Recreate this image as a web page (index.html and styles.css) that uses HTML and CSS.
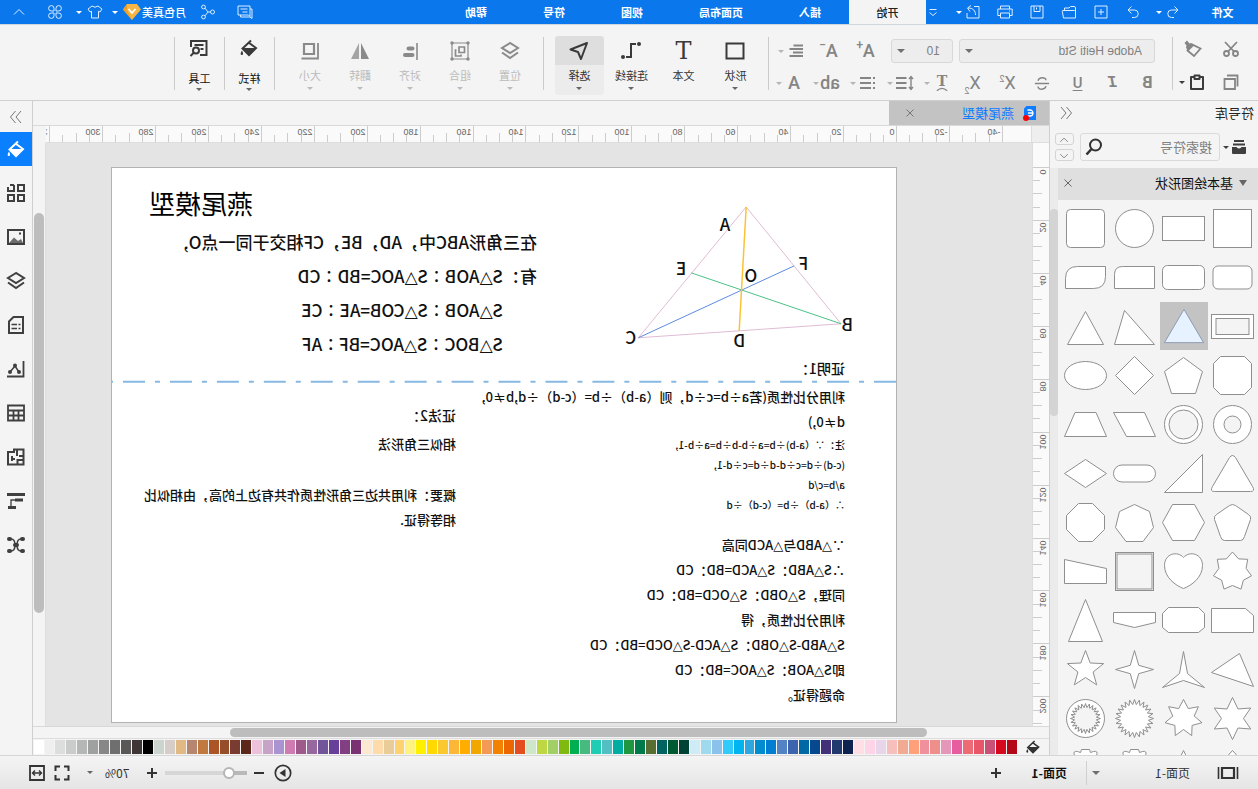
FILE: index.html
```html
<!DOCTYPE html>
<html lang="zh-CN">
<head>
<meta charset="utf-8">
<title>燕尾模型</title>
<link rel="stylesheet" href="styles.css">
</head>
<body>
<svg class="sprite" aria-hidden="true">
  <symbol id="undo" viewBox="0 0 16 16"><path d="M3 6h6.500a3.500 3.500 0 0 1 0 7.500H7M6.500 2.500 3 6l3.500 3.500"/></symbol>
  <symbol id="redo" viewBox="0 0 16 16"><path d="M13 6H6.500a3.500 3.500 0 0 0 0 7.500H9M9.500 2.500 13 6 9.500 9.500"/></symbol>
  <symbol id="new" viewBox="0 0 16 16"><path d="M2 2h12v12H2zM8 5v6M5 8h6"/></symbol>
  <symbol id="open" viewBox="0 0 16 16"><path d="M1.500 14V4q0-1.500 1.500-1.500h3.500L8 4h4.500v2.500M1.500 13.500V7.500q0-1 1-1h11.500q.8 0 .7.800L13.500 14h-12"/></symbol>
  <symbol id="save" viewBox="0 0 16 16"><path d="M2 2h12v12H2zM5 2v5.500h6V2M8.500 3.500v2"/></symbol>
  <symbol id="print" viewBox="0 0 16 16"><path d="M3.500 5V2h9v3M3.500 11.500H.8V5h14.400v6.500h-2.700M3.500 9h9v5h-9zM3 7h1"/></symbol>
  <symbol id="export" viewBox="0 0 16 16"><path d="M7 2.500H2v11.500h12V9M5.500 11c0-4 2-7 7.500-7M10 1.500l3.500 2.500-2.500 3.500"/></symbol>
  <symbol id="more" viewBox="0 0 16 16"><path d="M4.500 5.500h7M4.500 8.500 8 11.500l3.500-3"/></symbol>
  <symbol id="chat" viewBox="0 0 16 16"><path d="M3 2h12v9H4.500L3 12.500zM3 5H1v9.500l2-1.500h9.500V11M5.500 5h7M5.500 8h5"/></symbol>
  <symbol id="share" viewBox="0 0 16 16"><circle cx="3.500" cy="8" r="2"/><circle cx="12.500" cy="3" r="1.900"/><circle cx="12.500" cy="13" r="1.900"/><path d="M5.500 8h2.500l3-3.800M8 8l3 3.800"/></symbol>
  <symbol id="gem" viewBox="0 0 18 16"><path fill="#f7b643" stroke="none" d="M4 0h10l4 5.500L9 16 0 5.500z"/><path fill="#e89f2c" stroke="none" d="M14 0l4 5.500L9 16l5-10z"/><path stroke="#fff" stroke-width="1.800" d="M5.500 5 9 9l3.500-4"/></symbol>
  <symbol id="shirt" viewBox="0 0 16 16"><path d="M5 2q3 2.500 6 0l4 3-2 3-1.500-.8V14h-7V7.200L3 8 1 5z"/></symbol>
  <symbol id="apps" viewBox="0 0 16 16"><path d="M7 7H4.300A2.700 2.700 0 1 1 7 4.300zM9 7V4.300A2.700 2.700 0 1 1 11.700 7zM7 9v2.700A2.700 2.700 0 1 1 4.300 9zM9 9h2.700A2.700 2.700 0 1 1 9 11.700z"/></symbol>
  <symbol id="up" viewBox="0 0 16 16"><path d="M3 10.500 8 5.500l5 5"/></symbol>
  <symbol id="down" viewBox="0 0 16 16"><path d="M3 5.500l5 5 5-5"/></symbol>

  <symbol id="cut" viewBox="0 0 18 18"><g stroke-width="1.800"><circle cx="4.500" cy="13.500" r="2.500"/><circle cx="13.500" cy="13.500" r="2.500"/><path d="M3 2l9 9.500M15 2 6 11.500"/></g></symbol>
  <symbol id="brush" viewBox="0 0 18 18"><path stroke-width="1.800" d="M1.500 8.500 10 4.500l4.500 6-6.500 5.500z"/><path fill="currentColor" stroke="none" d="M8 5.500 11 3l1.500.5L15 .5 17.500 3 15.500 5.500l.5 2-2 4z"/></symbol>
  <symbol id="copy" viewBox="0 0 18 18"><path stroke-width="1.800" d="M5 6h10.500v10H5zM2.500 13.500V2.500H13"/></symbol>
  <symbol id="paste" viewBox="0 0 18 18"><path stroke-width="2" stroke-linejoin="round" d="M6 4H3v12h12V4h-3M6.500 2.500h5V6h-5z"/></symbol>
  <symbol id="align" viewBox="0 0 18 18"><path stroke-width="1.800" d="M2 3.500h9.500M2 7h13.500M2 10.500h10M2 14h13.500"/></symbol>
  <symbol id="spacing" viewBox="0 0 18 18"><path stroke-width="1.400" d="M3 3v12M1 5l2-2.500L5 5M1 13l2 2.500L5 13"/><path stroke-width="1.800" d="M7.500 4H18M7.500 9H18M7.500 14H18"/></symbol>
  <symbol id="bullets" viewBox="0 0 18 18"><path stroke-width="1.800" d="M2 4h2M2 9h2M2 14h2M6 4h11M6 9h11M6 14h11"/></symbol>
  <symbol id="strike" viewBox="0 0 18 18"><path stroke-width="1.600" d="M1 9.500h16M13.500 6.500C12.500 2 4.500 2 4.500 6M4.500 12.500C5.500 17 13.500 17 13.500 13"/></symbol>
  <symbol id="curve" viewBox="0 0 14 4"><path stroke-width="1.600" d="M1 4Q7-1.500 13 4"/></symbol>

  <symbol id="rect" viewBox="0 0 20 20"><path stroke-width="2" d="M1.500 2.500h17v15h-17z"/></symbol>
  <symbol id="connector" viewBox="0 0 20 20"><path d="M5 3h5v13h5" stroke-width="2"/><circle cx="2" cy="3" r="2" fill="currentColor" stroke="none"/><circle cx="18" cy="16" r="2" fill="currentColor" stroke="none"/></symbol>
  <symbol id="pointer" viewBox="0 0 20 20"><path stroke-width="2" stroke-linejoin="round" d="M2 2 18.500 8.500 11 11 8 18z"/></symbol>
  <symbol id="layers" viewBox="0 0 20 20"><path stroke-width="2" d="M10 2l8 5-8 5-8-5zM2 11.500l8 5.500 8-5.500"/></symbol>
  <symbol id="group" viewBox="0 0 20 20"><path stroke-width="1.200" d="M2 2h16v16H2z"/><path stroke-width="1.700" d="M5.500 6H11v5.500H5.500zM13.500 9h1v6H9v-1.500"/><g stroke="none" fill="currentColor"><circle cx="2" cy="2" r="1.700"/><circle cx="18" cy="2" r="1.700"/><circle cx="2" cy="18" r="1.700"/><circle cx="18" cy="18" r="1.700"/></g></symbol>
  <symbol id="alignobj" viewBox="0 0 20 20"><path stroke-width="1.600" d="M3 2v17"/><path stroke-width="4" stroke-linecap="round" d="M7.500 7.500h4M7.500 14h7.500"/></symbol>
  <symbol id="flip" viewBox="0 0 20 20"><path fill="currentColor" stroke="none" d="M9 2v16H1z"/><path fill="currentColor" opacity=".75" stroke="none" d="M11 2v16h8z"/></symbol>
  <symbol id="size" viewBox="0 0 20 20"><path stroke-width="2.200" d="M6 3h10v10H6z"/><path stroke-width="1.800" d="M2 2v15.500h16.500"/></symbol>
  <symbol id="bucket" viewBox="0 0 20 20"><path stroke-width="2" d="M8 2.500 16.500 10.500 10 17 3 10 10.500 4.500"/><path fill="currentColor" stroke="none" d="M3 10h14l-7 7.500zM17 12.500q2.500 4 .5 4.500t-1.500-2z"/></symbol>
  <symbol id="tool" viewBox="0 0 20 20"><path stroke-width="2" d="M9 17H2.500V3H18v6M5.500 7h9M5.500 11h3"/><circle cx="13" cy="12.500" r="3" stroke-width="2"/><path stroke-width="2" d="M15 14.500l3.500 3.500"/></symbol>

  <symbol id="library" viewBox="0 0 18 18"><path stroke-width="2.200" d="M4 3h10M3 6.500h12"/><path fill="currentColor" stroke="none" d="M2 9h4.500q2.500 3 5 0H16v6q0 1-1 1H3q-1 0-1-1z"/></symbol>
  <symbol id="search" viewBox="0 0 18 18"><circle cx="7.500" cy="7" r="5.500" stroke-width="2"/><path stroke-width="2.600" d="M11.500 11l5 5.500"/></symbol>
  <symbol id="rr" viewBox="0 0 14 14"><path d="M2 1l5 6-5 6M7.500 1l5 6-5 6"/></symbol>
  <symbol id="ll" viewBox="0 0 14 14"><path d="M12 1 7 7l5 6M6.500 1l-5 6 5 6"/></symbol>
  <symbol id="cross" viewBox="0 0 10 10"><path d="M1.500 1.500l7 7M8.500 1.500l-7 7"/></symbol>
  <symbol id="file" viewBox="0 0 14 16"><path fill="#0d7cff" stroke="none" d="M1 1h9.500L13 3.500V15H1z"/><path stroke="#fff" stroke-width="1.300" d="M9.500 5H7a3 3 0 0 0 0 6h2.500M4.500 8H9"/><circle cx="11" cy="13" r="3" fill="red" stroke="none"/></symbol>

  <symbol id="s-apps" viewBox="0 0 20 20"><path d="M2 2h6v6H2zM12 2h4M12 2v6h6V4M2 12h6v6H2zM12 12h6v6h-6z"/></symbol>
  <symbol id="s-image" viewBox="0 0 20 20"><path d="M2 3h16v14H2z"/><path fill="currentColor" stroke="none" opacity=".75" d="M3 16l2-4 3 2 4-3.500 5 5.500z"/><path fill="currentColor" stroke="none" d="M5 5.500h2v2H5z"/></symbol>
  <symbol id="s-doc" viewBox="0 0 20 20"><path d="M3 2h9.500L17 6.500V18H3z"/><path stroke-width="1.700" d="M5.500 9.500h2M9 9.500h5.500M5.500 13.500h2M9 13.500h5.500"/></symbol>
  <symbol id="s-chart" viewBox="0 0 20 20"><path stroke-width="1.800" d="M2.500 2v15.500H19"/><path stroke-width="1.500" d="M7 13l4-6 5 6"/><g fill="currentColor" stroke="none"><circle cx="7" cy="13" r="2"/><circle cx="11" cy="6.500" r="2"/><circle cx="16" cy="13" r="2"/></g></symbol>
  <symbol id="s-table" viewBox="0 0 20 20"><path stroke-width="1.800" d="M2 2.500h16v15H2zM2 7.500h16M2 12.500h16M7.500 7.500v10M12.500 7.500v10"/></symbol>
  <symbol id="s-plan" viewBox="0 0 20 20"><path d="M2.500 2.500H12V5h6v12.500H2.500zM2.500 9H7M9 2.500V9M2.500 13h6v4.500M14 9v5M11 12h3"/></symbol>
  <symbol id="s-gantt" viewBox="0 0 20 20"><path stroke-width="3" d="M1 3.500h18M3 9h8M10 16.500h8"/><path stroke-width="1.300" d="M10 9h5v7"/></symbol>
  <symbol id="s-mind" viewBox="0 0 20 20"><g fill="currentColor" stroke="none"><rect x="1" y="2" width="5" height="4" rx="2"/><rect x="14" y="2" width="5" height="4" rx="2"/><rect x="1" y="14" width="5" height="4" rx="2"/><rect x="14" y="14" width="5" height="4" rx="2"/><rect x="7" y="8" width="6" height="4" rx="2"/></g><path stroke-width="1.500" d="M5 4c3 0 4 2 4 6s-1 6-4 6M15 4c-3 0-4 2-4 6s1 6 4 6"/></symbol>

  <symbol id="b-view" viewBox="0 0 22 16"><path stroke-width="2.200" d="M5 3h12v10H5z"/><path stroke-width="1.600" d="M1.500 2v12M20.500 2v12"/></symbol>
  <symbol id="b-play" viewBox="0 0 18 18"><circle cx="9" cy="9" r="7.700" stroke-width="1.700"/><path fill="currentColor" stroke="none" d="M6.500 5l6 4-6 4z"/></symbol>
  <symbol id="b-minus" viewBox="0 0 12 12"><path stroke-width="2" d="M1 6h10"/></symbol>
  <symbol id="b-plus" viewBox="0 0 12 12"><path stroke-width="2" d="M1 6h10M6 1v10"/></symbol>
  <symbol id="b-full" viewBox="0 0 18 18"><path stroke-width="2" d="M2.500 7V2.500H7M11 2.500h4.500V7M15.500 11v4.500H11M7 15.500H2.500V11"/></symbol>
  <symbol id="b-fit" viewBox="0 0 18 18"><path stroke-width="1.800" d="M2 2h14v14H2z"/><path stroke-width="1.400" d="M5 9h8M7 6.500 4.500 9 7 11.500M11 6.500l2.500 2.500-2.500 2.500"/></symbol>
</svg>

<header class="titlebar">
  <button class="menu menu-file">文件</button>
  <div class="quick">
    <button class="qbtn" aria-label="撤销"><svg><use href="#undo"/></svg></button><i class="caret light"></i>
    <button class="qbtn" aria-label="恢复"><svg><use href="#redo"/></svg></button>
    <button class="qbtn" aria-label="新建"><svg><use href="#new"/></svg></button>
    <button class="qbtn" aria-label="打开"><svg><use href="#open"/></svg></button>
    <button class="qbtn" aria-label="保存"><svg><use href="#save"/></svg></button>
    <button class="qbtn" aria-label="打印"><svg><use href="#print"/></svg></button>
    <button class="qbtn" aria-label="导出"><svg><use href="#export"/></svg></button><i class="caret light"></i>
    <button class="qbtn" aria-label="更多"><svg><use href="#more"/></svg></button>
  </div>
  <nav class="menus">
    <button class="menu active">开始</button>
    <button class="menu">插入</button>
    <button class="menu menu-wide">页面布局</button>
    <button class="menu">视图</button>
    <button class="menu">符号</button>
    <button class="menu">帮助</button>
  </nav>
  <div class="account">
    <button class="abtn" aria-label="评论"><svg><use href="#chat"/></svg></button>
    <button class="abtn" aria-label="分享"><svg><use href="#share"/></svg></button>
    <span class="user">月色真美</span>
    <svg class="gem"><use href="#gem"/></svg><i class="caret light"></i>
    <button class="abtn" aria-label="主题"><svg><use href="#shirt"/></svg></button><i class="caret light"></i>
    <button class="abtn abtn-apps" aria-label="应用"><svg><use href="#apps"/></svg></button>
    <button class="abtn" aria-label="收起"><svg><use href="#up"/></svg></button>
  </div>
</header>

<div class="ribbon">
  <div class="clip">
    <button class="ic" aria-label="剪切"><svg><use href="#cut"/></svg></button>
    <button class="ic" aria-label="格式刷"><svg><use href="#brush"/></svg></button>
    <button class="ic" aria-label="复制"><svg><use href="#copy"/></svg></button>
    <button class="ic strong" aria-label="粘贴"><svg><use href="#paste"/></svg><i class="caret"></i></button>
  </div>
  <i class="sep"></i>
  <div class="fonts">
    <div class="frow frow-top">
      <span class="pick pick-font"><select aria-label="字体"><option>Adobe Heiti Std</option></select><i class="caret wide"></i></span>
      <span class="pick pick-size"><select aria-label="字号"><option>10</option></select><i class="caret wide"></i></span>
      <button class="split letter">A<sup>+</sup></button>
      <button class="split letter">A<sup>−</sup></button>
      <button class="split" aria-label="对齐"><svg><use href="#align"/></svg><i class="caret faint"></i></button>
    </div>
    <div class="frow">
      <button class="fmt bold">B</button>
      <button class="fmt ital">I</button>
      <button class="fmt under">U</button>
      <button class="fmt" aria-label="删除线"><svg><use href="#strike"/></svg></button>
      <button class="fmt">X<sup>2</sup></button>
      <button class="fmt">X<sub>2</sub></button>
      <button class="split tcurve"><span>T<svg><use href="#curve"/></svg></span><i class="caret faint"></i></button>
      <button class="split" aria-label="行距"><svg><use href="#spacing"/></svg><i class="caret faint"></i></button>
      <button class="split" aria-label="项目符号"><svg><use href="#bullets"/></svg><i class="caret faint"></i></button>
      <button class="split word"><span>ab</span><i class="caret faint"></i></button>
      <button class="split word"><span>A</span><i class="caret faint"></i></button>
    </div>
  </div>
  <i class="sep"></i>
  <div class="bigs insert">
    <button class="big"><svg><use href="#rect"/></svg><span>形状</span><i class="caret"></i></button>
    <button class="big"><b class="bigt">T</b><span>文本</span></button>
    <button class="big"><svg><use href="#connector"/></svg><span>连接线</span><i class="caret"></i></button>
    <button class="big on"><svg><use href="#pointer"/></svg><span>选择</span><i class="caret"></i></button>
  </div>
  <i class="sep"></i>
  <div class="bigs arrange">
    <button class="big off"><svg><use href="#layers"/></svg><span>位置</span><i class="caret"></i></button>
    <button class="big off"><svg><use href="#group"/></svg><span>组合</span><i class="caret"></i></button>
    <button class="big off"><svg><use href="#alignobj"/></svg><span>对齐</span><i class="caret"></i></button>
    <button class="big off"><svg><use href="#flip"/></svg><span>翻转</span><i class="caret"></i></button>
    <button class="big off"><svg><use href="#size"/></svg><span>大小</span><i class="caret"></i></button>
  </div>
  <i class="sep"></i>
  <div class="bigs"><button class="big roomy"><svg><use href="#bucket"/></svg><span>样式</span><i class="caret"></i></button></div>
  <i class="sep"></i>
  <div class="bigs"><button class="big roomy"><svg><use href="#tool"/></svg><span>工具</span><i class="caret"></i></button></div>
  <i class="sep"></i>
</div>

<main class="work">
  <aside class="library">
    <div class="lib-title"><h2>符号库</h2><button class="bare" aria-label="收起符号库"><svg class="i14"><use href="#rr"/></svg></button></div>
    <div class="lib-search">
      <button class="bare lib-menu" aria-label="符号库菜单"><svg class="i18"><use href="#library"/></svg><i class="caret"></i></button>
      <label class="searchbox"><input type="text" placeholder="搜索符号" aria-label="搜索符号"><svg class="i18"><use href="#search"/></svg></label>
      <div class="steps">
        <button aria-label="上一个"><svg><use href="#up"/></svg></button>
        <button aria-label="下一个"><svg><use href="#down"/></svg></button>
      </div>
    </div>
    <div class="lib-body">
      <div class="lib-main">
        <div class="lib-head"><i class="tri"></i><h3>基本绘图形状</h3><button class="bare" aria-label="关闭"><svg class="i10"><use href="#cross"/></svg></button></div>
        <div class="shapes" id="shapes"></div>
      </div>
      <div class="lib-scroll"><i></i></div>
    </div>
  </aside>

  <section class="editor">
    <div class="tabs">
      <div class="tab"><svg><use href="#file"/></svg><span>燕尾模型</span><button class="bare" aria-label="关闭标签"><svg class="i10"><use href="#cross"/></svg></button></div>
    </div>
    <div class="stage">
      <div class="corner"></div>
      <svg class="hruler" id="hruler"></svg>
      <div class="gutter"></div>
      <svg class="vruler" id="vruler"></svg>
      <div class="canvas">
        <article class="page">
          <svg class="figure" viewBox="0 0 785 555">
            <g class="lines">
              <path stroke="#e0bcd4" d="M150 39 55 156 258 170z"/>
              <path stroke="#4cc088" d="M55 156 205 105"/>
              <path stroke="#5b8be0" d="M258 170 102 98"/>
              <path stroke="#fcc236" stroke-width="1.500" d="M150 39 157 163"/>
              <path stroke="#86b8e2" stroke-width="2" stroke-dasharray="22 10 5 10" d="M0 214H785"/>
            </g>
            <g class="names">
              <text x="166" y="63">A</text><text x="210" y="107">E</text><text x="88" y="102">F</text><text x="139" y="114">O</text><text x="43" y="163">B</text><text x="260" y="176">C</text><text x="151" y="179">D</text>
            </g>
          </svg>
          <h1 class="doc-title">燕尾模型</h1>
          <div class="given">
            <p>在三角形ABC中，AD，BE，CF相交于同一点O,</p>
            <p>有：S<i>△</i>AOB∶S<i>△</i>AOC=BD∶CD</p>
            <p class="inset">S<i>△</i>AOB∶S<i>△</i>COB=AE∶CE</p>
            <p class="inset">S<i>△</i>BOC∶S<i>△</i>AOC=BF∶AF</p>
          </div>
          <div class="proof one">
            <h4>证明1：</h4>
            <p>利用分比性质(若a÷b=c÷d，则（a-b）÷b=（c-d）÷d,b≠0,</p>
            <p>d≠0,)</p>
            <div class="notes">
              <p>注：∵（a-b)÷b=a÷b-b÷b=a÷b-1,</p>
              <p>(c-d)÷d=c÷d-d÷d=c÷d-1,</p>
              <p>a/b=c/d</p>
              <p>∴（a-b）÷b=（c-d）÷d</p>
            </div>
            <p>∵<i>△</i>ABD与<i>△</i>ACD同高</p>
            <p>∴S<i>△</i>ABD：S<i>△</i>ACD=BD：CD</p>
            <p>同理，S<i>△</i>OBD：S<i>△</i>OCD=BD：CD</p>
            <p>利用分比性质，得</p>
            <p>S<i>△</i>ABD-S<i>△</i>OBD：S<i>△</i>ACD-S<i>△</i>OCD=BD：CD</p>
            <p>即S<i>△</i>AOB：S<i>△</i>AOC=BD：CD</p>
            <p>命题得证。</p>
          </div>
          <div class="proof two">
            <h4>证法2：</h4>
            <p>相似三角形法</p>
            <p class="later">概要：利用共边三角形性质作共有边上的高，由相似比</p>
            <p>相等得证.</p>
          </div>
        </article>
      </div>
      <div class="vscroll"><i></i></div>
    </div>
    <div class="hscroll"><i></i></div>
    <div class="palette"><button class="bare" aria-label="填充"><svg class="i16"><use href="#bucket"/></svg></button><div class="swatches" id="swatches"></div></div>
  </section>

  <aside class="side">
    <button class="fold" aria-label="展开"><svg class="i14"><use href="#ll"/></svg></button>
    <button class="sbtn current" aria-label="样式"><svg><use href="#bucket"/></svg></button>
    <button class="sbtn" aria-label="符号"><svg><use href="#s-apps"/></svg></button>
    <button class="sbtn" aria-label="图片"><svg><use href="#s-image"/></svg></button>
    <button class="sbtn" aria-label="图层"><svg><use href="#layers"/></svg></button>
    <button class="sbtn" aria-label="文档"><svg><use href="#s-doc"/></svg></button>
    <button class="sbtn" aria-label="图表"><svg><use href="#s-chart"/></svg></button>
    <button class="sbtn" aria-label="表格"><svg><use href="#s-table"/></svg></button>
    <button class="sbtn" aria-label="平面图"><svg><use href="#s-plan"/></svg></button>
    <button class="sbtn" aria-label="甘特图"><svg><use href="#s-gantt"/></svg></button>
    <button class="sbtn" aria-label="思维导图"><svg><use href="#s-mind"/></svg></button>
  </aside>
</main>

<footer class="status">
  <div class="pager">
    <button class="bare" aria-label="视图"><svg class="bview"><use href="#b-view"/></svg></button>
    <span class="page-name">页面-1</span>
    <i class="caret wide"></i>
  </div>
  <button class="bare page-tab">页面-1</button>
  <button class="bare add" aria-label="添加页面"><svg class="i12"><use href="#b-plus"/></svg></button>
  <div class="zoom">
    <button class="bare" aria-label="播放"><svg class="i18"><use href="#b-play"/></svg></button>
    <button class="bare" aria-label="缩小"><svg class="i12"><use href="#b-minus"/></svg></button>
    <input type="range" min="0" max="100" value="18" aria-label="缩放">
    <button class="bare" aria-label="放大"><svg class="i12"><use href="#b-plus"/></svg></button>
    <span class="percent">70%</span><i class="caret"></i>
    <button class="bare" aria-label="全屏"><svg class="i18"><use href="#b-full"/></svg></button>
    <button class="bare" aria-label="适合宽度"><svg class="i18"><use href="#b-fit"/></svg></button>
  </div>
</footer>
<script src="app.js"></script>
</body>
</html>
```

FILE: styles.css
```css
* { box-sizing: border-box; }
html, body { height: 100%; margin: 0; }
html { overflow: hidden; background: #f4f4f4; }
body {
  display: flex; flex-direction: column;
  transform: scaleX(-1);
  font: 12px/16px "Noto Sans CJK SC", sans-serif;
  color: #222; background: #f4f4f4;
}
h1, h2, h3, h4, p { margin: 0; font-weight: 400; }
button, input, select { font: inherit; color: inherit; margin: 0; }
button { padding: 0; border: 0; background: none; }
svg { fill: none; stroke: currentColor; flex: none; }
.sprite { display: none; }
.i10 { width: 10px; height: 10px; }
.i12 { width: 12px; height: 12px; }
.i14 { width: 14px; height: 14px; }
.i16 { width: 16px; height: 16px; }
.i18 { width: 18px; height: 18px; }
.bare { display: flex; align-items: center; justify-content: center; }
.caret {
  flex: none; width: 0; height: 0;
  border: 3px solid transparent; border-top-color: currentColor; border-bottom: 0;
}
.caret.light { color: #fff; }
.caret.wide { border-width: 4px 4px 0; color: #707070; }
.caret.faint { color: #b5b5b5; }

/* title bar */
.titlebar { display: flex; flex: none; height: 24px; background: #0a77ec; color: #fff; }
.menu { width: 78px; height: 24px; font-size: 11px; font-weight: 700; }
.menu-file { width: 71px; }
.menu-wide { width: 100px; }
.menu.active { width: 77px; background: #f4f4f4; color: #222; font-weight: 500; }
.menus { display: flex; flex: none; }
.quick { display: flex; flex: none; align-items: center; width: 261px; gap: 5px; }
.qbtn { flex: none; width: 27px; height: 24px; display: grid; place-items: center; }
.qbtn + .caret { margin: 0 -3px 0 -7px; }
.quick .caret + .qbtn { margin-left: 7px; }
.qbtn svg, .abtn svg { width: 16px; height: 16px; color: #dceeff; }
.account { display: flex; align-items: center; margin-left: auto; padding-right: 11px; gap: 5px; }
.abtn { width: 16px; height: 24px; display: grid; place-items: center; }
.abtn:first-child { margin-right: 16px; }
.abtn:last-child { margin-left: 15px; }
.abtn + .user { margin-left: 9px; }
.caret + .abtn { margin-left: 4px; }
.caret + .abtn-apps { margin-left: 8px; }
.user { font-size: 11px; font-weight: 500; }
.gem { width: 18px; height: 16px; margin-left: -4px; }

/* ribbon */
.ribbon { display: flex; flex: none; height: 77px; padding-top: 12px; border-top: 1px solid #cfd6dd; border-bottom: 1px solid #cfcfcf; color: #858585; }
.sep { flex: none; width: 1px; height: 53px; background: #cbcbcb; }
.clip { width: 85px; padding-left: 8px; display: grid; grid-template-columns: 38px 38px; grid-template-rows: 24px 34px; row-gap: 4px; height: 60px; }
.ic { display: flex; align-items: center; justify-content: center; gap: 3px; }
.ic svg { width: 18px; height: 18px; }
.strong { color: #3c3c3c; }
.fonts { width: 403px; padding: 2px 0 0 7px; }
.frow { display: flex; align-items: center; height: 24px; }
.frow-top { padding-left: 10px; margin-bottom: 8px; }
.pick { display: flex; align-items: center; height: 24px; border: 1px solid #d8d8d8; border-radius: 3px; background: #ededed; }
.pick select { flex: 1; min-width: 0; appearance: none; border: 0; background: none; padding: 0 0 0 12px; font: 12px "Liberation Sans", "Noto Sans CJK SC", sans-serif; color: #808080; }
.pick .caret { margin-right: 5px; }
.pick-font { width: 196px; }
.pick-size { width: 62px; margin: 0 7px 0 6px; }
.split { width: 37px; height: 24px; display: flex; align-items: center; gap: 3px; padding-left: 4px; }
.split svg { width: 18px; height: 18px; }
.split .caret { margin-left: auto; margin-right: 6px; }
.letter, .fmt, .word { font: 400 18px/20px "Roboto", sans-serif; }
.letter { justify-content: center; gap: 0; padding: 0; font-weight: 500; }
.letter sup { align-self: flex-start; font-size: 12px; line-height: 12px; }
.letter + .split:last-child { margin-left: 1px; }
.fmt { width: 35px; height: 24px; }
.fmt svg { display: block; width: 16px; height: 16px; margin: 0 auto; }
.fmt sup, .fmt sub { font-size: 9px; line-height: 0; }
.bold { font-weight: 700; font-size: 16px; }
.ital { font-style: italic; font-size: 16px; font-family: "Liberation Mono", monospace; font-weight: 700; }
.under { font-size: 15px; font-weight: 500; text-decoration: underline; text-underline-offset: 2px; }
.word { font-weight: 500; }
.word span { width: 18px; text-align: center; }
.tcurve { font: 700 14px/12px "DejaVu Serif", serif; }
.tcurve span { display: grid; justify-items: center; width: 18px; }
.tcurve svg { width: 12px; height: 4px; }
.bigs { display: flex; width: 49px; justify-content: center; }
.insert { width: 224px; justify-content: flex-end; padding-right: 11px; gap: 3px; }
.arrange { width: 268px; justify-content: flex-start; padding-left: 8px; }
.big { display: grid; grid-template-rows: 29px 20px 6px; justify-items: center; align-items: center; align-content: start; width: 49px; height: 59px; margin-top: -1px; color: #3a3a3a; border-radius: 3px; }
.arrange .big { width: 50px; }
.big svg { width: 20px; height: 20px; }
.big span { font-size: 11px; color: #333; white-space: nowrap; }
.big .caret { color: #666; }
.bigt { font: 500 24px/24px "DejaVu Serif", serif; }
.big.on { background: linear-gradient(#dedede 29px, #ececec 29px); }
.big.off { color: #8a8a8a; }
.big.off span, .big.off .caret { color: #bbb; }
.big.roomy { grid-template-rows: 24px 8px 20px 2px; }
.big.roomy span { grid-row: 3; color: #111; }
.big.roomy .caret { grid-row: 4; }

/* library panel */
.work { display: flex; flex: 1; min-height: 0; }
.library { display: flex; flex-direction: column; flex: none; width: 209px; border-right: 1px solid #cfcfcf; }
.lib-title { display: flex; flex: none; justify-content: space-between; align-items: center; height: 25px; padding: 0 9px 2px 4px; color: #777; }
.lib-title .i14 { transform: scaleX(-1); }
.lib-title h2 { font-size: 13px; line-height: 20px; color: #222; }
.lib-search { display: flex; flex: none; align-items: center; height: 42px; padding: 0 5px 0 10px; }
.lib-menu { flex: none; gap: 1px; width: 28px; color: #3f3f3f; justify-content: flex-start; }
.searchbox { display: flex; align-items: center; flex: 1; min-width: 0; height: 28px; padding: 0 4px 0 7px; border: 1px solid #dadada; border-radius: 3px; color: #333; }
.searchbox input { flex: 1; min-width: 0; width: 0; border: 0; padding: 0; background: none; outline: 0; font-size: 13px; }
.searchbox input::placeholder { color: #808080; }
.steps { display: grid; flex: none; gap: 4px; margin-left: 6px; }
.steps button { display: grid; place-items: center; width: 19px; height: 12px; border: 1px solid #d4d4d4; border-radius: 3px; color: #666; }
.steps svg { width: 14px; height: 12px; }
.lib-body { display: flex; flex: 1; min-height: 0; }
.lib-main { flex: 1; display: flex; flex-direction: column; min-height: 0; }
.lib-head { display: flex; flex: none; align-items: center; height: 32px; padding: 0 5px 3px 11px; background: #dfdfdf; color: #666; }
.lib-head h3 { flex: 1; margin-left: 6px; font-size: 13px; line-height: 20px; color: #111; }
.tri { border: 4px solid transparent; border-top: 6px solid #666; border-bottom: 0; }
.shapes { display: grid; grid-template-columns: repeat(4, 49px); grid-auto-rows: 49px; flex: 1; min-height: 0; overflow: hidden; padding: 4px 0 0 1px; }
.shapes svg { width: 49px; height: 49px; stroke: #8f8f8f; fill: #fff; stroke-width: 1; }
.shapes svg.picked { width: 48px; height: 48px; background: #c3c3c3; fill: #e6f2ff; stroke: #8a9ab0; }
.shapes .hollow { fill: #f4f4f4; }
.lib-scroll { flex: none; width: 8px; padding-top: 41px; background: #ebebeb; }
.lib-scroll i { display: block; height: 38%; border-radius: 4px; background: #d4d4d4; }

/* editor */
.editor { display: flex; flex-direction: column; flex: 1; min-width: 0; }
.tabs { flex: none; height: 25px; border-bottom: 1px solid #d9d9d9; }
.tab { display: flex; align-items: center; width: 160px; height: 24px; padding: 0 16px 0 12px; background: #c3c3c3; color: #0d7cff; font-size: 13px; }
.tab > svg { width: 14px; height: 16px; margin-right: 9px; }
.tab span { flex: 1; line-height: 24px; }
.tab .bare { color: #777; }
.stage { display: grid; flex: 1; min-height: 0; grid-template-columns: 17px minmax(0, 1fr) 13px; grid-template-rows: 17px minmax(0, 1fr); }
.corner { background: #eee; border-bottom: 1px solid #ddd; }
.hruler, .vruler { width: 100%; height: 100%; background: #fafafa; stroke: #ccc; overflow: hidden; }
.hruler { border-bottom: 1px solid #ddd; border-left: 1px solid #ddd; }
.vruler { border-right: 1px solid #ddd; }
.hruler text, .vruler text { font: 9px "Liberation Sans", sans-serif; fill: #666; stroke: none; }
.vscroll { grid-column: 3; padding: 70px 1px 0; border-left: 1px solid #ddd; }
.vscroll i { display: block; height: 78%; border-radius: 5px; background: #bdbdbd; }
.canvas { overflow: hidden; padding: 24px 0 0 135px; background: #e4e4e4; }
.page { position: relative; width: 786px; height: 556px; border: 1px solid #b2b2b2; background: #fff; color: #111; }
.page p { white-space: nowrap; font-weight: 500; }
.page p i { font-family: "DejaVu Sans", sans-serif; font-style: normal; font-weight: 400; line-height: 1; }
.figure { position: absolute; inset: 0; }
.names text { font-size: 17px; font-weight: 500; fill: #111; stroke: none; }
.doc-title { position: absolute; left: 643px; top: 17px; font-size: 26px; line-height: 36px; color: #000; }
.given { position: absolute; left: 359px; top: 57px; font-size: 17px; line-height: 34px; }
.inset { padding-left: 34px; }
.proof { position: absolute; font-size: 13px; line-height: 25px; }
.proof h4 { font-size: 14px; line-height: 32px; font-weight: 500; }
.one { left: 51px; top: 184px; }
.two { left: 440px; top: 231px; }
.notes { padding: 1px 0 17px; font-size: 10px; line-height: 20px; }
.two .later { margin-top: 26px; }

.hscroll { flex: none; height: 13px; padding: 1px 197px 0 122px; border-top: 1px solid #d8d8d8; border-bottom: 1px solid #ddd; }
.hscroll i { display: block; height: 9px; border-radius: 5px; background: #bdbdbd; }
.palette { display: flex; flex: none; align-items: center; height: 16px; padding: 0 1px 0 8px; color: #333; }
.swatches { display: flex; gap: 1px; flex: 1; height: 14px; margin-left: 8px; }
.swatches i { flex: 1; }

/* right strip */
.side { display: flex; flex-direction: column; flex: none; width: 33px; gap: 10px; border-left: 1px solid #cfcfcf; color: #3f3f3f; }
.fold { height: 31px; margin-bottom: -10px; display: grid; place-items: center; color: #777; }
.fold svg { transform: scaleX(-1); }
.sbtn { height: 34px; display: grid; place-items: center; stroke-width: 2; }
.sbtn svg { width: 20px; height: 20px; }
.sbtn.current { background: #0a80ff; color: #fff; }

/* status bar */
.status { display: flex; flex: none; align-items: center; height: 34px; border-top: 1px solid #d6d6d6; background: linear-gradient(#f4f4f4, #e5e5e5); color: #333; }
.pager { display: flex; align-items: center; width: 172px; height: 24px; padding: 0 5px 0 19px; border-right: 1px solid #cfcfcf; }
.bview { width: 22px; height: 16px; }
.page-name { flex: 1; margin-left: 27px; }
.page-tab { margin-left: 19px; font-weight: 700; color: #111; }
.add { margin-left: 29px; }
.zoom { display: flex; align-items: center; gap: 7px; margin-left: auto; padding-right: 28px; }
.zoom input { appearance: none; width: 82px; height: 12px; margin: 0 0 0 -1px; background: linear-gradient(90deg, #b9b9b9 18%, #d6d6d6 18%) center / 100% 4px no-repeat; border-radius: 2px; }
.zoom input::-webkit-slider-thumb { appearance: none; width: 12px; height: 12px; border: 2px solid #b5b5b5; border-radius: 50%; background: #fff; }
.zoom > .bare:first-child { margin-right: 2px; }
.percent { margin: 0 5px 0 10px; }
.zoom .caret { margin-right: 9px; color: #666; }
```

FILE: app.js
```js
const C = 24.5;
const pts = list => list.map(([x, y]) => `${(C + x).toFixed(1)},${(C + y).toFixed(1)}`).join(" ");
const poly = (...list) => `<polygon points="${pts(list)}"/>`;
const soft = (...list) => `<polygon stroke-linejoin="round" points="${pts(list)}"/>`;
const rect = (w, h, r = 0, cls = "") => `<rect class="${cls}" x="${C - w / 2}" y="${C - h / 2}" width="${w}" height="${h}" rx="${r}"/>`;
const circle = (r, cls = "") => `<circle class="${cls}" cx="${C}" cy="${C}" r="${r}"/>`;
const path = d => `<path transform="translate(${C} ${C})" d="${d}"/>`;

function ring(n, r, inner) {
  const out = [];
  for (let i = 0; i < n * 2; i++) {
    const a = (i / (n * 2)) * Math.PI * 2 - Math.PI / 2;
    const d = i % 2 ? inner : r;
    out.push([Math.cos(a) * d, Math.sin(a) * d]);
  }
  return out;
}

const gear = path("M-11-12q-2-5 3-4l3 1 1-3h8l1 3 3-1q5-1 3 4l8 8v20h-38V-4z");
const shapes = [
  rect(38, 38), rect(42, 24), circle(19), rect(38, 38, 4),
  rect(39, 23, 5), rect(42, 24, 5),
  path("M-20-11H12q8 0 8 8V11H-20z"), path("M-20-11H8Q20-11 20 1V11H-8Q-20 11-20-1z"),
  rect(42, 24) + rect(33, 16, 0, "hollow"), poly([0, -17], [20, 17], [-20, 17]),
  poly([10, -16], [20, 18], [-20, 18]), poly([0, -15], [18, 18], [-18, 18]),
  poly([-12, -19], [12, -19], [19, -12], [19, 12], [12, 19], [-12, 19], [-19, 12], [-19, -12]),
  poly([0, -18], [19, -4], [12, 18], [-12, 18], [-19, -4]),
  poly([0, -19], [19, 0], [0, 19], [-19, 0]), `<ellipse cx="${C}" cy="${C}" rx="21" ry="14"/>`,
  circle(19) + circle(8.5, "hollow"), circle(19) + circle(14.5, "hollow"),
  poly([21, -12], [-10, -12], [-21, 12], [8, 12]), poly([-10.5, -12], [10.5, -12], [21, 12], [-21, 12]),
  path("M-3-16q3-4 6 0L20 13q3 5-2 5H-18q-5 0-2-5z"), poly([-19, -19], [-19, 19], [19, 19]),
  rect(42, 17, 8.5), poly([0, -14], [21, 0], [0, 14], [-21, 0]),
  path("M-3-17q3-2 6 0L16-8q3 2 2 5L12 14q-1 4-4 4H-8q-3 0-4-4L-18-3q-1-3 2-5z"),
  poly([-11, -18], [11, -18], [21, 0], [11, 18], [-11, 18], [-21, 0]),
  poly([0, -18], [15, -11], [19, 5], [8.5, 19], [-8.5, 19], [-19, 5], [-15, -11]),
  poly([-7, -19], [7, -19], [19, -7], [19, 7], [7, 19], [-7, 19], [-19, 7], [-19, -7]),
  soft(...ring(7, 19.5, 14)),
  path("M0-14C6-21 19-18 19-6 19 6 8 14 0 17-8 14-19 6-19-6-19-18-6-21 0-14z"),
  rect(38, 38) + rect(35, 35, 0, "hollow"), poly([21, -12], [-21, -3], [-21, 12], [21, 12]),
  poly([-13, -12], [21, -12], [21, 12], [-21, 12], [-21, -5]),
  poly([-15, -13], [15, -13], [21, -7], [21, 7], [15, 12], [-15, 12], [-21, 7], [-21, -7]),
  poly([-21, -8], [21, -8], [21, 2], [0, 7], [-21, 2]), poly([0, -21], [17, 21], [-17, 21]),
  poly([-7, -16], [21, 3], [-21, 17]), poly([0, -18], [4, 4], [21, 18], [0, 11], [-21, 18], [-4, 4]),
  poly(...ring(4, 19, 6)), poly(...ring(5, 19, 8)),
  poly(...ring(6, 21, 11)), poly(...ring(7, 19, 11)), poly(...ring(24, 19, 14)),
  circle(19) + `<polygon class="hollow" points="${pts(ring(24, 15, 11))}"/>`,
  poly([0, -17], [18, 3], [-18, 3]), poly([0, -17], [10, 3], [-10, 3]), gear, gear
];
const picked = 9;
document.getElementById("shapes").innerHTML = shapes
  .map((s, i) => `<svg viewBox="0 0 49 49"${i === picked ? ' class="picked"' : ""}>${s}</svg>`).join("");

const STEP = 52.93;
function ruler(id, origin, from, vertical) {
  const svg = document.getElementById(id);
  const box = svg.getBoundingClientRect();
  const length = vertical ? box.height : box.width;
  let out = "";
  for (let q = from * 4; origin + (q * STEP) / 4 < length; q++) {
    const p = Math.round(origin + (q * STEP) / 4) + 0.5;
    const major = q % 4 === 0;
    const start = major ? 0 : q % 2 === 0 ? 7 : 9;
    out += vertical
      ? `<line x1="${start}" x2="17" y1="${p}" y2="${p}"/>`
      : `<line y1="${start}" y2="17" x1="${p}" x2="${p}"/>`;
    if (major) {
      const n = (q / 4) * 20;
      out += vertical
        ? `<text text-anchor="end" transform="translate(9 ${p + 2}) rotate(-90)">${n}</text>`
        : `<text x="${p + 2}" y="9">${n}</text>`;
    }
  }
  svg.innerHTML = out;
}
ruler("hruler", 134, -2, false);
ruler("vruler", 24, 0, true);

const colors = ("b30718 d60a1f c95178 e9566a ec6b74 e75d9f e497b8 ef8f8b f0909c ffa07a f1ab93 f6bfbc e9d5ea ffd4e6 ffdfe5 0f2350 " +
  "22396f 42307a 08488f 0068a5 3f64af 5383c4 007ed2 008cce 2ea7e0 00b4f1 32cafb 8bc2eb 9fd9ee cfebf6 " +
  "004234 005a32 006461 586d30 007a4a 1f9640 00ada0 52bfc2 1ecdb4 47ba80 00af52 80ba10 a3d066 bdd841 cde7c8 " +
  "e34d20 ec6700 f28200 f39a56 f2a600 ffae00 fdb737 fbc82f ffd900 fff000 fff280 ffd26e e9cc97 ffdbab fde9d2 " +
  "7a3272 823f81 68409a 72549b 97689e 9f5a8c ce7cb1 ab92d0 c8a3c8 ebc1dc " +
  "5c281c 7a3b30 954e29 ab5527 c07a40 b78670 e0b985 d6ccc8 cbd5cd " +
  "000000 3e3736 5a5757 6f6f6f 878787 9fa0a0 b5b6b6 cacbcb dcdddd efefef ffffff").split(" ");
document.getElementById("swatches").innerHTML = colors.map(c => `<i style="background:#${c}"></i>`).join("");
```
